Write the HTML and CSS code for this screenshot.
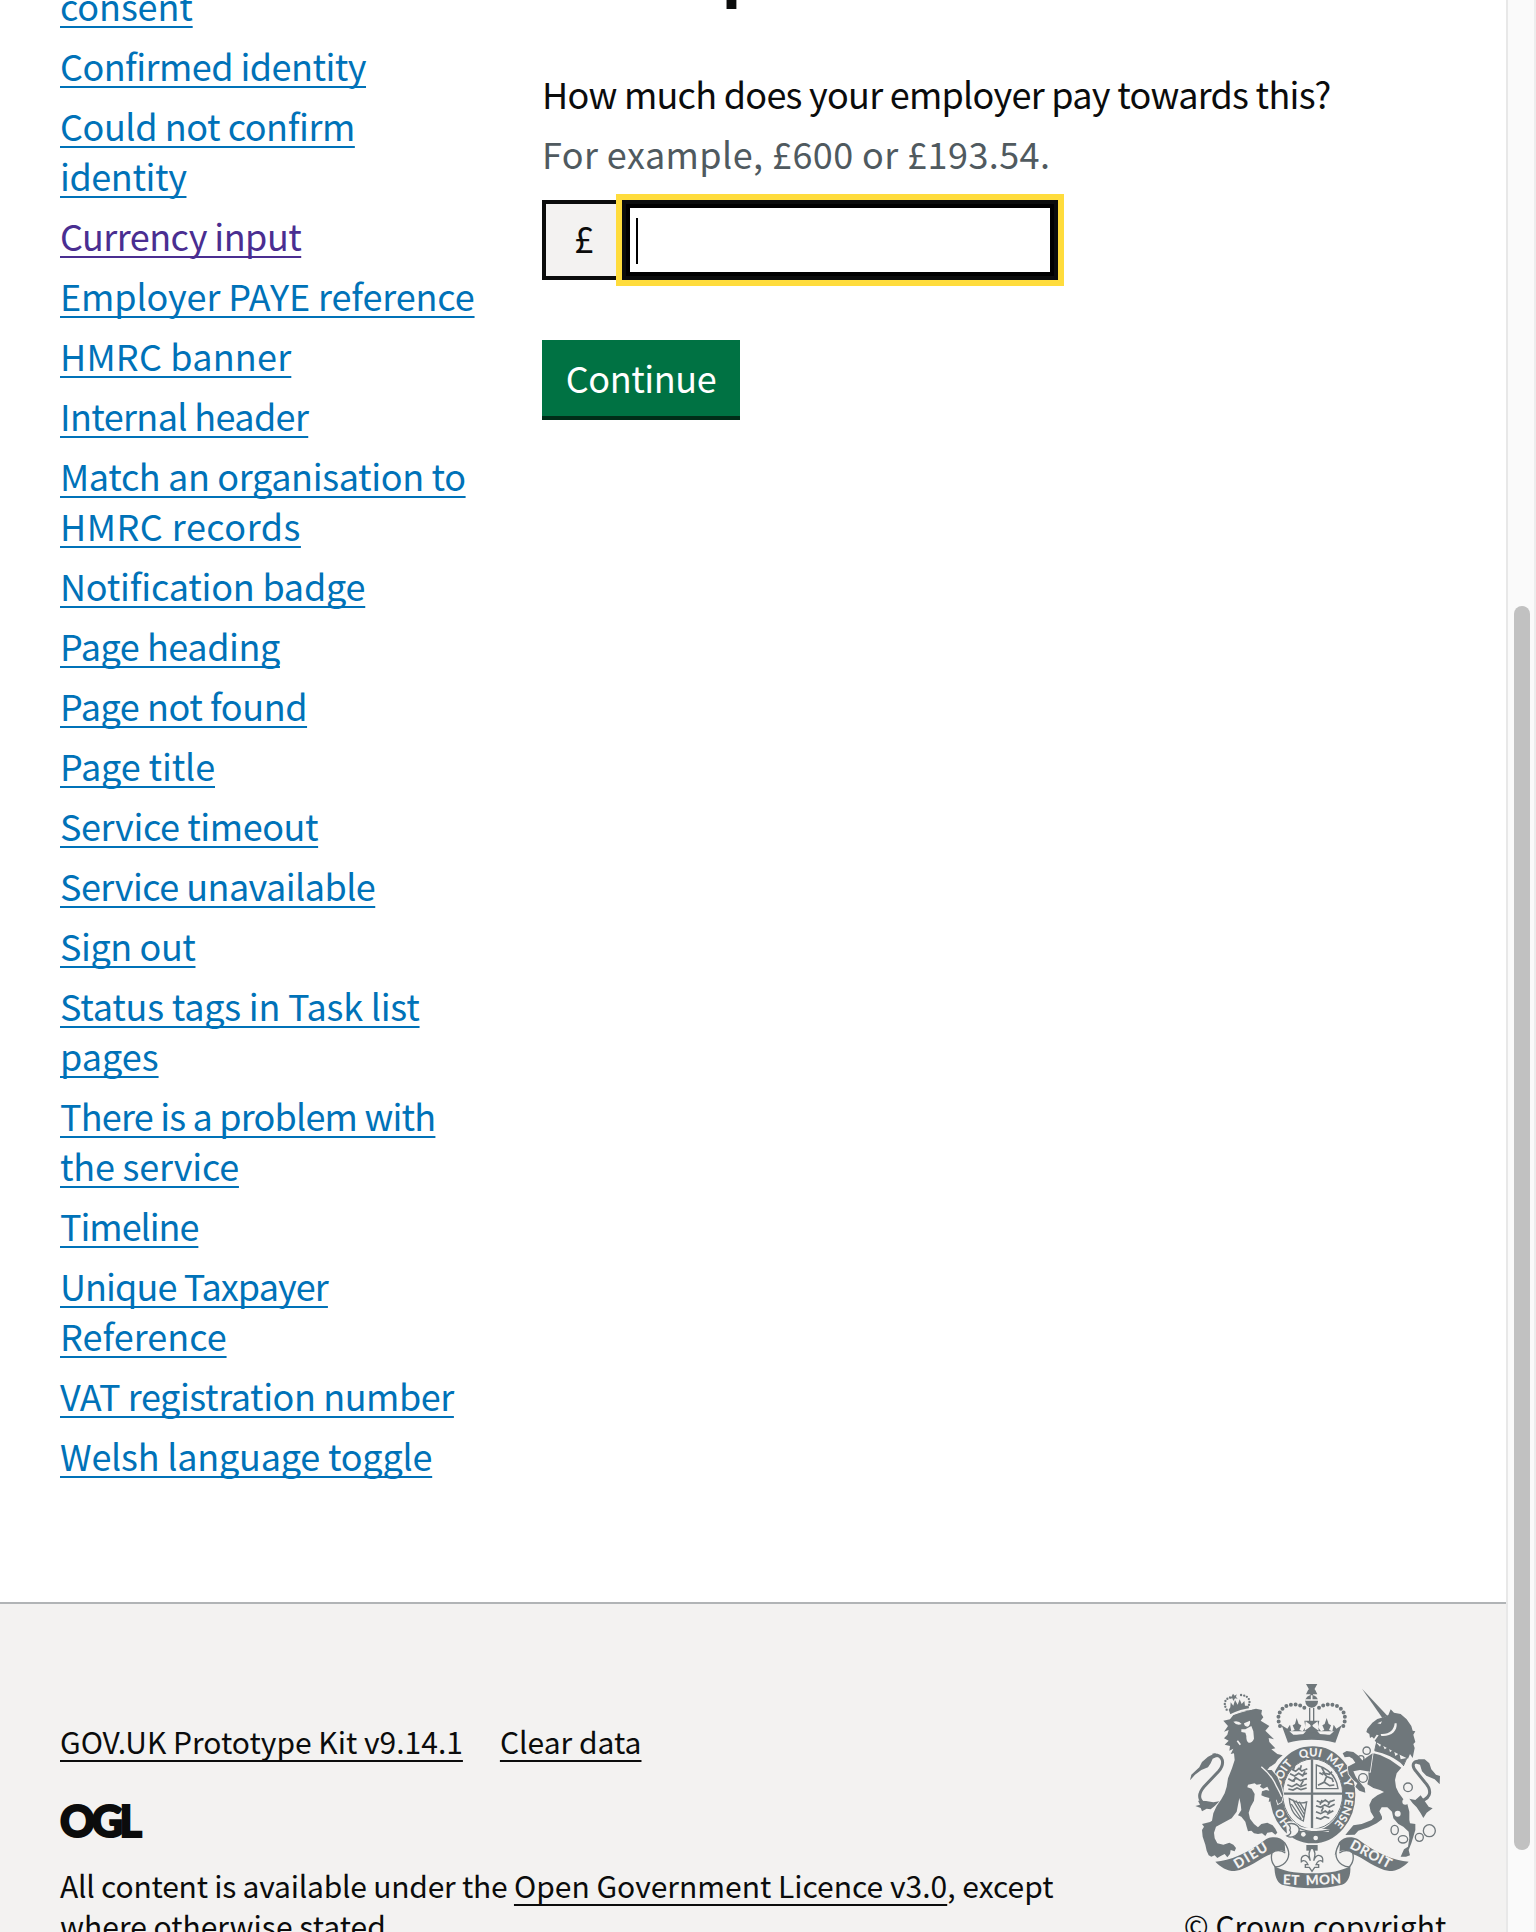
FILE: index.html
```html
<!DOCTYPE html>
<html lang="en">
<head>
<meta charset="utf-8">
<title>Currency input</title>
<link rel="stylesheet" href="styles.css">
</head>
<body>
<div class="page">
  <div class="columns">
    <ul class="nav">
      <li><a class="t1" href="#">consent</a></li>
      <li><a class="t5" href="#">Confirmed identity</a></li>
      <li><a class="t4" href="#">Could not confirm<br>identity</a></li>
      <li><a class="visited t5" href="#">Currency input</a></li>
      <li><a class="t1" href="#">Employer PAYE reference</a></li>
      <li><a class="w2" href="#">HMRC banner</a></li>
      <li><a class="t6" href="#">Internal header</a></li>
      <li><a class="t3" href="#">Match an organisation to<br><span class="w5">HMRC records</span></a></li>
      <li><a class="t2" href="#">Notification badge</a></li>
      <li><a class="t4" href="#">Page heading</a></li>
      <li><a class="t4" href="#">Page not found</a></li>
      <li><a class="t1" href="#">Page title</a></li>
      <li><a class="t4" href="#">Service timeout</a></li>
      <li><a class="t5" href="#">Service unavailable</a></li>
      <li><a class="t4" href="#">Sign out</a></li>
      <li><a class="t2" href="#">Status tags in Task list<br><span class="t0">pages</span></a></li>
      <li><a class="t8" href="#">There is a problem with<br><span class="t2">the service</span></a></li>
      <li><a class="t10" href="#">Timeline</a></li>
      <li><a class="t9" href="#">Unique Taxpayer<br><span class="t0">Reference</span></a></li>
      <li><a class="t4" href="#">VAT registration number</a></li>
      <li><a class="t2" href="#">Welsh language toggle</a></li>
    </ul>
    <main class="main">
      <h1 class="heading">Example</h1>
      <label class="label" for="amount">How much does your employer pay towards this?</label>
      <div class="hint">For example, £600 or £193.54.</div>
      <div class="field">
        <span class="prefix">£</span>
        <div class="input" id="amount"><span class="caret"></span></div>
      </div>
      <button class="button">Continue</button>
    </main>
  </div>
  <footer class="footer">
    <div class="meta">
      <div class="links"><a href="#">GOV.UK Prototype Kit v9.14.1</a><a href="#">Clear data</a></div>
      <svg class="ogl" width="82" height="34" viewBox="0 0 82 34"><text x="0" y="32.5" textLength="82" lengthAdjust="spacing">OGL</text></svg>
      <p class="licence"><span class="t2">All content is available under the </span><a href="#">Open Government Licence v3.0</a>, except<br>where otherwise stated</p>
    </div>
    <div class="copyright">
      <svg class="crest" width="270" height="220" viewBox="0 0 810 660">
        <defs><path id="garter" d="M398 489A98 115 0 0 1 398 259A98 115 0 0 1 398 489"/></defs>
        <!-- crown -->
        <path d="M378 42h34l-8 14 8 17h-34l8-17z"/><path class="cut" d="M375 54l12 4-12 5zM415 54l-12 4 12 5z"/>
        <path d="M391 70h8v12h-8z"/><circle cx="395" cy="94" r="19"/><path class="cutline" d="M376 90h38M395 76v14"/>
        <path class="dots" d="M300 168C286 134 304 108 334 104C352 101 368 108 378 118M490 168C504 134 486 108 456 104C438 101 422 108 412 118"/>
        <path class="thin" d="M389 114v42M401 114v42"/>
        <path d="M305 166l17 10 8-12 4 20 10-4-6-14 7-4 5-18 6 18 8 4-6 14 10 4 8-12-3-20h45l-4 20 9 12 10-4-6-14 7-4 6-18 6 18 7 4-6 14 10 4 4-20 8 12 16-10-19 52c-40-12-102-12-142 0z"/>
        <path class="cut" d="M377 154l18 13 18-13 3 28-21-15-21 15zM328 184l12 10h28l10-10M412 184l10 10h28l12-10"/>
        <path d="M395 166l17 22h-34zM389 154h12l-4 14h-5z"/>
        <!-- garter and shield -->
        <ellipse class="ring" cx="398" cy="374" rx="109" ry="127"/>
        <path class="cut" d="M324 232c0-14 28-21 72-21s74 7 74 21l-6 8c-34-14-98-16-134 0z"/>
        <path d="M326 214c30-14 108-14 140 0l2-14c-40-12-102-12-142 0z"/>
        <ellipse class="oval" cx="398" cy="372" rx="90" ry="105"/>
        <path class="thin" d="M310 371h178M396 268v208" style="stroke-width:7"/>
        <path class="beast" d="M335 298l12 6 10-9 8 8 17-7M330 311l14 7 12-8 10 6 15-6M325 326l12 7 12-9 12 8 20-6M322 344l14 6 14-8 12 8 18-7M325 357l14 3 12-6 12 5 17-5M344 288l-5 14M364 286l-4 14M375 304l-8 16M347 320l-6 16M370 332l-8 14"/>
        <path class="beast" d="M410 392l14 6 12-8 10 7 18-7M408 407l14 5 12-7 14 6 16-8M408 425l14 6 14-8 10 7 14-8M408 443l14 4 12-7 14 5M426 390l-6 14M452 392l-8 13M430 412l-6 13M450 420l-8 14"/>
        <path class="thin" d="M409 285v71h65c-4-32-25-59-65-71z"/>
        <path class="beast" d="M414 346l18-9 8-18-12-13M432 336l17 11 14-2M442 320l14 6 4 10M425 292l9 18 14 3 8-8M418 308l12 6"/>
        <path class="thin" d="M328 386c2 32 16 54 42 67l10-57c-20 7-36-1-52-10zM338 389l34 56M348 392l26 43M358 395l18 30M334 402l30 45"/>
        <g class="motto">
          <text><textPath href="#garter" startOffset="15%">HO</textPath></text>
          <text><textPath href="#garter" startOffset="34.5%">SOIT</textPath></text>
          <text><textPath href="#garter" startOffset="49%">QUI</textPath></text>
          <text><textPath href="#garter" startOffset="61.5%">MAL</textPath></text>
          <text><textPath href="#garter" startOffset="70%">Y</textPath></text>
          <text><textPath href="#garter" startOffset="81.5%">PENSE</textPath></text>
        </g>
        <path class="cut" d="M318 458c14-8 30-4 42 14l88 6-2 8-90-4c-4 14-18 24-34 21z"/>
        <path class="thin" d="M324 462c22-6 40 10 31 26-8 12-22 17-34 10 12-4 14-12 8-18 4-4 2-12-5-18zM356 474c26 12 60 14 92 6"/>
        <circle class="cut" cx="370" cy="493" r="7"/><circle class="cut" cx="407" cy="504" r="7"/>
        <!-- lion -->
        <path class="dots small" d="M140 119C128 99 136 83 158 81M203 113C215 93 207 77 183 75"/>
        <path d="M146 119L151 112L152 97L160 107L165 90L173 104L179 88L185 102L193 93L195 107L206 107L206 122Q180 122 152 135zM159 71l5 6 6-4-2 8 5 5-8-1-5 8-3-8-7 1 5-7z"/>
        <path class="edge" d="M262 300L275 300L292 320L304 350L310 375L304 396L294 402z"/>
        <path d="M130 152L150 148L160 135L180 128L210 120L228 116L246 120L244 132L250 142L242 152L268 168L256 182L282 208L266 204L268 216L286 235L274 238L292 252L308 256L294 268L286 280L268 292L262 300L268 304L285 325L300 350L308 375L304 392L296 398L290 388L284 402L276 392L266 396L268 384L254 380L244 376L246 364L258 360L268 362L262 350L250 356L240 350L244 342L230 344L224 340L204 344L202 352L215 356L224 372L222 392L212 410L206 428L210 446L222 462L234 472L244 462L262 458L278 466L286 476L292 488L286 494L276 486L262 488L256 498L246 490L234 492L222 490L214 482L204 484L200 470L196 455L184 440L174 436L184 420L182 402L178 384L170 425L155 445L130 458L108 470L102 488L104 505L112 520L130 524L148 518L160 524L168 534L164 544L152 540L150 552L142 562L134 552L122 558L112 564L104 556L94 560L86 556L80 542L76 524L68 500L66 480L72 470L66 462L90 456L96 452L100 430L110 408L124 388L134 370L140 350L144 325L156 295L164 270L162 250L152 252L160 236L148 242L150 228L134 224L146 212L132 205L142 194L146 180L132 185L144 168z"/>
        <path class="cut" d="M160 155Q176 151 185 162Q170 168 160 155zM192 160L210 152Q212 166 202 170Q193 170 192 160zM184 178L196 178L214 168L220 184L222 206Q216 220 206 218Q198 214 199 198L196 188L184 186z"/>
        <path class="cutline" d="M150 136Q182 120 216 116M172 212l9 12"/>
        <path class="cutline" d="M244 290Q276 316 290 350Q300 368 305 380" style="stroke-width:4"/>
        <path class="tail" d="M100 405C58 408 48 378 72 350L116 304C136 280 130 252 98 255"/>
        <path d="M30 331L34 314L58 292L66 276L84 260L105 250L122 260L108 262L98 266L92 280L84 292L64 300L45 314zM78 393L100 397L118 394L105 407L92 418L80 416L66 424L62 414L46 408L60 404L54 392z"/>
        <!-- unicorn -->
        <path d="M546 56L622 137L607 144z"/>
        <path d="M559 186L562 176L577 158L592 147L610 142L625 135L632 118L642 128L662 132L680 148L694 168L698 182L706 184L700 194L706 216L700 222L704 234L698 264L690 252L684 266L650 250L589 217L584 212L596 196L590 194L582 206L576 200L570 204L568 192z"/>
        <path class="cut" d="M650 160C652 184 634 200 604 198L602 192C628 194 642 180 644 160zM592 160l14-6-4 8z"/>
        <path d="M584 244L589 218L600 230L606 218L614 238L626 230L630 247L641 238L646 258L658 250L662 268L680 264L670 287C648 264 614 250 584 244z"/>
        <path class="thin" d="M584 242L590 216M670 288L681 263" style="stroke-width:3"/>
        <path d="M580 250L600 255L630 269L664 293L650 310L645 330L648 352L656 368L668 385L682 402L688 425L688 450L690 460L706 462L706 480L700 500L694 520L686 540L690 556L678 560L662 560L672 538L684 530L688 505L686 485L670 470L655 462L640 445L636 425L622 412L605 412L598 424L606 440L606 448L590 460L566 472L535 482L524 494L496 495L505 484L520 466L545 462L575 450L582 442L572 425L568 405L576 388L592 376L612 366L600 360L580 354L562 343L566 325L565 305L562 280z"/>
        <path class="edge" d="M578 250L560 262L548 272L536 258L520 246L500 243L488 250L494 262L508 260L518 266L526 278L503 290L506 312L520 330L532 340L526 350L538 362L556 368L554 354L544 342L528 322L520 304L540 300L570 305z"/>
        <path class="tail" d="M708 394C752 392 760 364 734 336L710 306C690 284 702 270 722 275"/>
        <path d="M700 278L716 268L734 268L748 280L754 298L768 314L780 318L779 343L764 328L739 317L726 304L720 284zM688 386L706 390L722 376L746 410L758 415L748 422L740 428L730 444L722 430L710 412L698 400z"/>
        <g class="chain"><circle cx="560" cy="242" r="11"/><circle cx="543" cy="266" r="9"/><circle cx="549" cy="324" r="13"/><circle cx="684" cy="352" r="13"/><ellipse cx="644" cy="480" rx="11" ry="14"/><ellipse cx="669" cy="508" rx="14" ry="11"/><circle cx="718" cy="502" r="12"/><circle cx="748" cy="482" r="18"/></g>
        <circle class="cut" cx="676" cy="395" r="9"/><circle class="cut" cx="653" cy="431" r="9"/>
        <!-- ribbon -->
        <path d="M106 575C150 572 200 552 259 507C279 497 303 501 315 517L328 555C310 537 288 537 276 551C240 563 206 597 164 603C140 603 122 591 106 575z"/>
        <path d="M686 575C642 572 592 552 533 507C513 497 489 501 477 517L464 555C482 537 504 537 516 551C552 563 586 597 628 603C652 603 670 591 686 575z"/>
        <path class="thin light" d="M314 519c28 40 2 70-28 72-12-14-14-28-10-42 10-10 26-10 40 0M480 519c-28 40-2 70 28 72 12-14 14-28 10-42-10-10-26-10-40 0"/>
        <path d="M283 588c22 14 58 22 113 22s92-8 115-22c2 28-6 50-25 56-58 14-122 14-180 0-17-8-22-28-23-56z"/>
        <g class="scroll"><text transform="translate(172 597) rotate(-31)" textLength="110">DIEU</text><text transform="translate(507 533) rotate(28)" textLength="134">DROIT</text><text transform="translate(308 643) rotate(2)" textLength="50">ET</text><text transform="translate(378 646) rotate(-3)" textLength="106">MON</text></g>
        <path d="M379 525h34v17h-34z"/>
        <path class="thin light" d="M396 532c-14 14-8 28-5 40-10-26-30-16-27 3 8-8 16 0 20 9h-8v8h12l8 12 8-12h12v-8h-8c4-9 12-17 20-9 3-19-17-29-27-3 3-12 9-26-5-40z"/>
      </svg>
      <a class="crown" href="#">© Crown copyright</a>
    </div>
  </footer>
</div>
<div class="scrollbar"><div class="thumb"></div></div>
</body>
</html>
```
FILE: styles.css
```css
* { box-sizing: border-box; }
body {
  margin: 0;
  height: 1932px;
  overflow: hidden;
  display: flex;
  background: #fff;
  color: #0b0c0c;
  font: 36px/50px "Noto Sans CJK JP", "Noto Sans", sans-serif;
}
.page {
  width: 1506px;
  height: 1932px;
  overflow: hidden;
  display: flex;
  flex-direction: column;
}
.columns {
  display: flex;
  height: 1602px;
  flex: none;
  padding-left: 60px;
}
a {
  color: #0b0c0c;
  text-decoration: underline 2px;
  text-underline-offset: 6px;
  text-decoration-skip-ink: none;
}
/* tracking steps */
.t0 { letter-spacing: 0; }
.t1 { letter-spacing: -0.13px; }
.t2 { letter-spacing: -0.22px; }
.t3 { letter-spacing: -0.37px; }
.t4 { letter-spacing: -0.43px; }
.t5 { letter-spacing: -0.55px; }
.t6 { letter-spacing: -0.63px; }
.t8 { letter-spacing: -0.8px; }
.t9 { letter-spacing: -0.9px; }
.t10 { letter-spacing: -1.05px; }
.w2 { letter-spacing: 0.2px; }
.w5 { letter-spacing: 0.5px; }
.nav {
  width: 482px;
  flex: none;
  margin: -20px 0 0;
  padding: 0;
  list-style: none;
  white-space: nowrap;
}
.nav li { margin-bottom: 10px; }
.nav a { color: #0072b8; text-underline-offset: 5px; }
.nav a.visited { color: #4a2e91; }
.main { display: flex; flex-direction: column; align-items: flex-start; }
.heading {
  margin: -84px 0 0;
  font-size: 67px;
  line-height: 100px;
  height: 100px;
}
.label { margin-top: 52px; white-space: nowrap; letter-spacing: -0.73px; }
.hint { margin-top: 10px; color: #505a5f; letter-spacing: 0.42px; }
.field { display: flex; margin-top: 22px; height: 80px; }
.prefix {
  width: 80px;
  border: 4px solid #0b0c0c;
  border-right: 0;
  background: #f3f2f1;
  text-align: center;
  line-height: 66px;
}
.input {
  width: 436px;
  border: 4px solid #0b0c0c;
  outline: 6px solid #ffdc3c;
  box-shadow: inset 0 0 0 4px #000;
  padding: 14px 10px;
}
.caret { display: block; width: 2px; height: 46px; background: #000; }
.button {
  margin-top: 60px;
  width: 198px;
  height: 80px;
  padding: 0 0 3px;
  border: 0;
  border-bottom: 4px solid #002d18;
  background: #007243;
  color: #fff;
  font: inherit;
  letter-spacing: -0.45px;
}
.footer {
  flex: none;
  height: 400px;
  border-top: 2px solid #b1b4b6;
  background: #f3f2f1;
  display: flex;
  justify-content: space-between;
  padding: 66px 56px 0 60px;
  font-size: 30px;
  line-height: 40px;
}
.meta { padding-top: 51px; white-space: nowrap; }
.links { display: flex; gap: 37px; }
.ogl { display: block; margin-top: 43px; overflow: visible; }
.ogl text { font: 900 43px Lato, sans-serif; fill: #0b0c0c; stroke: #0b0c0c; stroke-width: 2px; }
.licence { margin: 27px 0 0; }
.copyright { width: 270px; text-align: center; white-space: nowrap; }
.crown { text-decoration: none; display: block; margin-top: 15px; }
.crest { display: block; fill: #6f777b; }
.crest .cut { fill: #f3f2f1; }
.crest .cutline { fill: none; stroke: #f3f2f1; stroke-width: 5; }
.crest .edge { stroke: #f3f2f1; stroke-width: 5; paint-order: stroke; }
.crest .thin { fill: none; stroke: #6f777b; stroke-width: 4; }
.crest .light { fill: #f3f2f1; }
.crest .beast { fill: none; stroke: #6f777b; stroke-width: 5; }
.crest .tail { fill: none; stroke: #6f777b; stroke-width: 9; }
.crest .dots { fill: none; stroke: #6f777b; stroke-width: 12; stroke-linecap: round; stroke-dasharray: 0 14; }
.crest .small { stroke-width: 7; stroke-dasharray: 0 9; }
.crest .ring { fill: none; stroke: #6f777b; stroke-width: 38; }
.crest .oval { fill: #f3f2f1; stroke: #6f777b; stroke-width: 3; }
.crest .chain { fill: none; stroke: #6f777b; stroke-width: 4; }
.crest .motto, .crest .scroll { fill: #f3f2f1; font: 900 34px Lato, sans-serif; }
.crest .motto { text-anchor: middle; }
.crest .scroll { font-size: 41px; }
.scrollbar {
  width: 30px;
  background: #fafafa;
  border-left: 2px solid #e8e8e8;
  border-right: 2px solid #ededed;
  padding: 606px 4px 0 6px;
}
.thumb { height: 1244px; border-radius: 8px; background: #c1c1c1; }
```
